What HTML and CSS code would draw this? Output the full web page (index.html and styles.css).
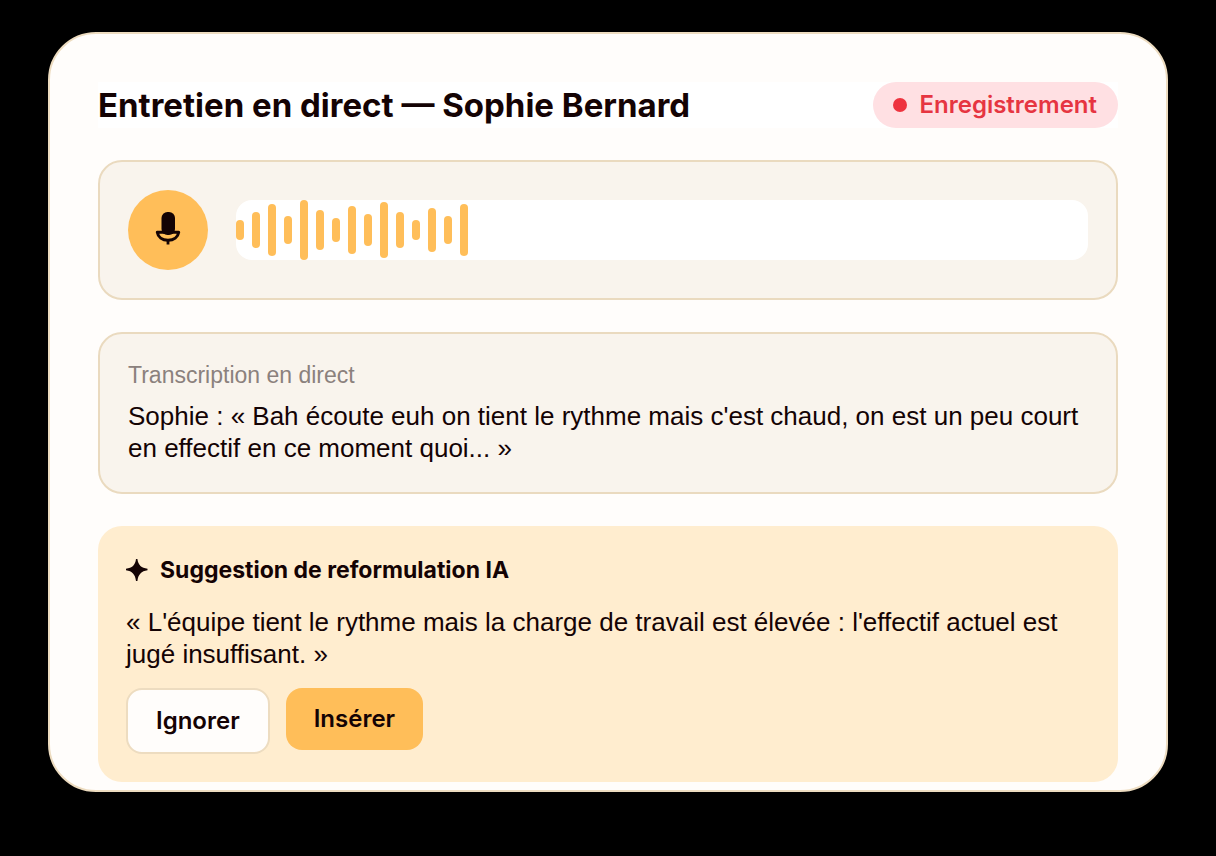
FILE: index.html
```html
<!DOCTYPE html>
<html lang="fr">
<head>
    <meta charset="UTF-8">
    <meta name="viewport" content="width=device-width, initial-scale=1.0">
    <title>Entretien en direct</title>
    <link rel="stylesheet" href="styles.css">
</head>
<body>
    <main class="card">
        <!-- Header -->
        <header class="card-header">
            <h1>Entretien en direct — Sophie Bernard</h1>
            <span class="badge"><span class="badge-dot"></span>Enregistrement</span>
        </header>

        <!-- Recorder -->
        <section class="panel recorder">
            <button type="button" class="mic-button" aria-label="Micro">
                <svg width="28" height="36" viewBox="0 0 28 36" fill="none">
                    <path d="M3.300 20.200H24.700C24 25 19.800 28.200 14 28.200S4 25 3.300 20.200Z" stroke="#140304" stroke-width="3" stroke-linejoin="round"/>
                    <rect x="7.500" y="0" width="13.500" height="23" rx="6" fill="#140304"/>
                    <path d="M14 28V32.500" stroke="#140304" stroke-width="2.800"/>
                </svg>
            </button>
            <div class="waveform">
                <span class="bar" style="height: 20px"></span>
                <span class="bar" style="height: 36px"></span>
                <span class="bar" style="height: 52px"></span>
                <span class="bar" style="height: 28px"></span>
                <span class="bar" style="height: 60px"></span>
                <span class="bar" style="height: 40px"></span>
                <span class="bar" style="height: 24px"></span>
                <span class="bar" style="height: 48px"></span>
                <span class="bar" style="height: 32px"></span>
                <span class="bar" style="height: 56px"></span>
                <span class="bar" style="height: 36px"></span>
                <span class="bar" style="height: 20px"></span>
                <span class="bar" style="height: 44px"></span>
                <span class="bar" style="height: 28px"></span>
                <span class="bar" style="height: 52px"></span>
            </div>
        </section>

        <!-- Live transcript -->
        <section class="panel">
            <h2 class="panel-label">Transcription en direct</h2>
            <p class="text">Sophie : « Bah écoute euh on tient le rythme mais c'est chaud, on est un peu court en effectif en ce moment quoi... »</p>
        </section>

        <!-- AI suggestion -->
        <section class="suggestion">
            <h2 class="suggestion-title">
                <svg width="22" height="22" viewBox="0 0 22 22">
                    <path d="M10 0H11.400C12.200 6.200 15.400 9 21.500 9.700V11.300C15.400 12.200 12.200 15.400 11.400 22H10C9.200 15.400 6.200 12.200 0 11.300V9.700C6.200 9 9.200 6.200 10 0Z" fill="#140304"/>
                </svg>
                Suggestion de reformulation IA
            </h2>
            <p class="text">« L'équipe tient le rythme mais la charge de travail est élevée : l'effectif actuel est jugé insuffisant. »</p>
            <div class="actions">
                <button type="button" class="btn btn-outline">Ignorer</button>
                <button type="button" class="btn btn-primary">Insérer</button>
            </div>
        </section>
    </main>
</body>
</html>
```

FILE: styles.css
```css
* {
    margin: 0;
    padding: 0;
    box-sizing: border-box;
}

body {
    font-family: Inter, "Liberation Sans", sans-serif;
    background: #000;
    color: #140304;
    padding: 32px 48px;
}

.card {
    display: flex;
    flex-direction: column;
    gap: 32px;
    padding: 48px 48px 8px;
    background: #fffdfb;
    border: 2px solid #eddcc0;
    border-radius: 48px;
}

.card-header {
    display: flex;
    justify-content: space-between;
    align-items: center;
    background: #fff;
}

h1 {
    font-size: 33px;
    font-weight: 700;
    line-height: 46px;
}

.badge {
    display: flex;
    align-items: center;
    gap: 12px;
    padding: 8px 21px 8px 20px;
    font-size: 24px;
    font-weight: 600;
    line-height: 30px;
    color: #e63541;
    background: #ffe0e3;
    border-radius: 23px;
}

.badge-dot {
    width: 14px;
    height: 14px;
    background: #ee333f;
    border-radius: 50%;
}

.panel {
    padding: 28px;
    background: #f9f4ed;
    border: 2px solid #eadabf;
    border-radius: 24px;
}

.recorder {
    display: flex;
    align-items: center;
    gap: 28px;
}

.mic-button {
    display: flex;
    justify-content: center;
    align-items: center;
    width: 80px;
    height: 80px;
    background: #ffbe59;
    border: none;
    border-radius: 50%;
    cursor: pointer;
}

.waveform {
    display: flex;
    flex: 1;
    align-items: center;
    gap: 8px;
    background: #fff;
    border-radius: 16px;
}

.bar {
    width: 8px;
    background: #ffbe59;
    border-radius: 4px;
}

.panel-label {
    margin-bottom: 12px;
    font-family: "Liberation Sans", sans-serif;
    font-size: 23px;
    font-weight: 400;
    line-height: 26px;
    color: #8b817d;
}

.text {
    font-family: "Liberation Sans", sans-serif;
    font-size: 26px;
    line-height: 32px;
}

.suggestion {
    padding: 28px;
    background: #ffedcf;
    border-radius: 24px;
}

.suggestion-title {
    display: flex;
    align-items: center;
    gap: 12px;
    margin-bottom: 20px;
    font-size: 23px;
    font-weight: 700;
    line-height: 32px;
}

.actions {
    display: flex;
    align-items: flex-start;
    gap: 16px;
    margin-top: 18px;
}

.btn {
    padding: 16px 28px;
    font-family: inherit;
    font-size: 24px;
    font-weight: 600;
    line-height: 30px;
    color: #140304;
    border: none;
    border-radius: 16px;
    cursor: pointer;
}

.btn-outline {
    background: #fffdfb;
    border: 2px solid #eddcc0;
}

.btn-primary {
    background: #ffbe59;
}
```
